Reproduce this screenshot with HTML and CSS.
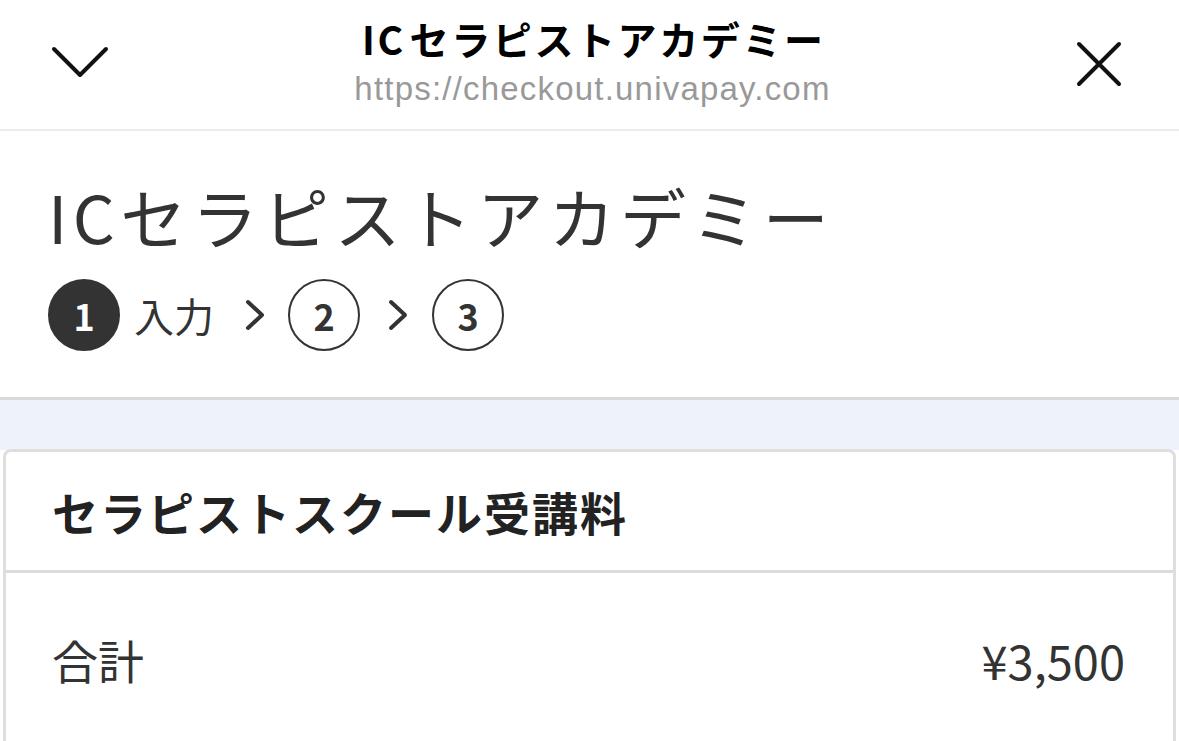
FILE: index.html
```html
<!DOCTYPE html>
<html lang="ja">
<head>
<meta charset="utf-8">
<link rel="stylesheet" href="styles.css">
</head>
<body>
<header class="topbar">
  <svg class="icon-down" width="60" height="40" viewBox="0 0 60 40"><path d="M4 6 L30 32 L56 6" fill="none" stroke="#111" stroke-width="4" stroke-linecap="round" stroke-linejoin="round"/></svg>
  <div class="topbar-center">
    <div class="topbar-title">IC<span class="gap"></span>セラピストアカデミー</div>
    <div class="topbar-url">https://checkout.univapay.com</div>
  </div>
  <svg class="icon-close" width="48" height="48" viewBox="0 0 48 48"><path d="M4 4 L44 44 M44 4 L4 44" fill="none" stroke="#111" stroke-width="4" stroke-linecap="round"/></svg>
</header>
<section class="intro">
  <h1 class="shop-name">ICセラピストアカデミー</h1>
  <div class="steps">
    <span class="step step-active">1</span>
    <span class="step-label">入力</span>
    <svg class="step-sep" width="22" height="34" viewBox="0 0 22 34"><path d="M4 4 L18 17 L4 30" fill="none" stroke="#333" stroke-width="4" stroke-linecap="round" stroke-linejoin="round"/></svg>
    <span class="step">2</span>
    <svg class="step-sep step-sep-2" width="22" height="34" viewBox="0 0 22 34"><path d="M4 4 L18 17 L4 30" fill="none" stroke="#333" stroke-width="4" stroke-linecap="round" stroke-linejoin="round"/></svg>
    <span class="step">3</span>
  </div>
</section>
<div class="band"></div>
<section class="card">
  <div class="card-head">セラピストスクール受講料</div>
  <div class="card-row">
    <span class="row-label">合計</span>
    <span class="row-value">¥3,500</span>
  </div>
</section>
</body>
</html>
```
FILE: styles.css
```css
* { box-sizing: border-box; }
html, body { margin: 0; padding: 0; background: #fff; }
body {
  font-family: "Noto Sans CJK JP", "Noto Sans", sans-serif;
  color: #333;
  overflow: hidden;
  height: 741px;
}
.topbar {
  height: 131px;
  border-bottom: 2px solid #ececec;
  display: flex;
  align-items: center;
  justify-content: space-between;
  padding: 0 56px 0 50px;
}
.icon-down { margin-top: -4px; }
.icon-close { margin-top: -2px; }
.topbar-center {
  display: flex;
  flex-direction: column;
  align-items: center;
  margin-top: -5px;
}
.topbar-title {
  font-weight: 700;
  font-size: 39px;
  line-height: 46px;
  color: #000;
  letter-spacing: 2.6px;
  margin-right: -2.6px;
}
.gap { display: inline-block; width: 4px; }
.topbar-url {
  font-family: "Liberation Sans", Arial, sans-serif;
  font-size: 33px;
  line-height: 40px;
  color: #999;
  letter-spacing: 1.2px;
  margin-top: 8px;
}
.intro {
  padding: 38px 0 0 48px;
  height: 269px;
  border-bottom: 3px solid #d9d9d9;
}
.shop-name {
  margin: 0;
  font-weight: 400;
  font-size: 66px;
  line-height: 92px;
  letter-spacing: 5.4px;
  color: #333;
}
.steps {
  display: flex;
  align-items: center;
  margin-top: 18px;
}
.step {
  width: 72px;
  height: 72px;
  border-radius: 50%;
  border: 2.5px solid #333;
  display: flex;
  align-items: center;
  justify-content: center;
  font-weight: 700;
  font-size: 36px;
  color: #333;
}
.step-active { background: #333; color: #fff; }
.step-label {
  font-size: 40px;
  margin-left: 14px;
  margin-right: 30px;
}
.step-sep { margin-right: 22px; }
.step-sep-2 { margin-left: 27px; margin-right: 23px; }
.band {
  height: 50px;
  background: #eef3fb;
}
.card {
  margin: -1px 3px 0;
  border: 3px solid #dedede;
  border-radius: 8px;
  background: #fff;
  height: 320px;
}
.card-head {
  height: 121px;
  border-bottom: 3px solid #dcdcdc;
  display: flex;
  align-items: center;
  padding-left: 46px;
  font-weight: 700;
  font-size: 46px;
  letter-spacing: 2px;
  color: #222;
}
.card-row {
  display: flex;
  justify-content: space-between;
  align-items: center;
  height: 172px;
  padding: 0 48px 0 46px;
  font-size: 46px;
  color: #333;
}
.row-value { font-size: 47px; }
```
